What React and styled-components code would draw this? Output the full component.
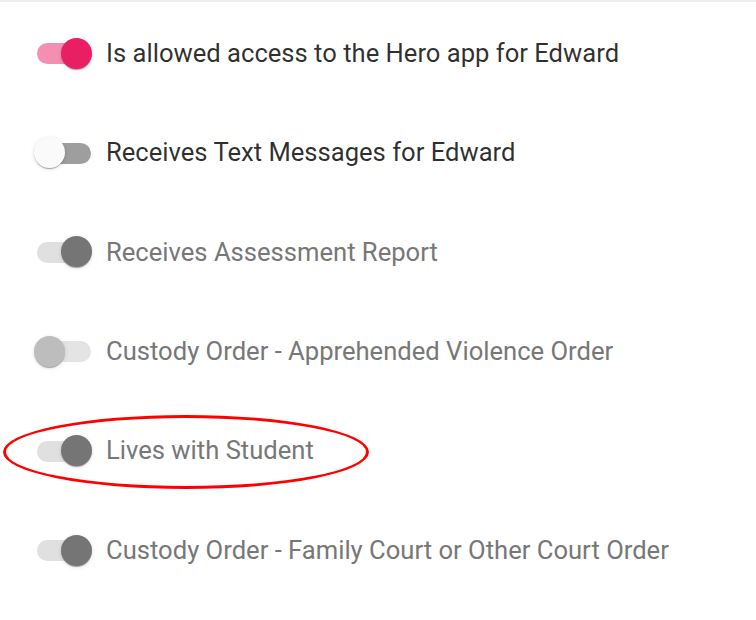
import React from "react";
import styled, { createGlobalStyle } from "styled-components";

const GlobalStyle = createGlobalStyle`
  html, body {
    margin: 0;
    padding: 0;
    background: #ffffff;
  }
  body {
    font-family: Roboto, "Liberation Sans", sans-serif;
  }
`;

const Page = styled.div`
  width: 756px;
  height: 620px;
  box-sizing: border-box;
  border-top: 2px solid #eeeeee;
  padding-top: 2px;
  overflow: hidden;
`;

const Row = styled.div`
  position: relative;
  display: flex;
  align-items: center;
  height: 99.4px;
  padding-left: 34px;
  gap: 14px;
`;

const SwitchRoot = styled.span`
  position: relative;
  display: inline-block;
  flex: none;
  width: 58px;
  height: 32px;
`;

const Track = styled.span`
  position: absolute;
  left: 3px;
  top: 5.5px;
  width: 54px;
  height: 21px;
  border-radius: 11px;
  background: ${(p) => p.$color};
`;

const Thumb = styled.span`
  position: absolute;
  top: 0;
  left: ${(p) => (p.$on ? "27px" : "0")};
  width: 31px;
  height: 31px;
  border-radius: 50%;
  background: ${(p) => p.$color};
  box-shadow: 0 2px 1px -1px rgba(0, 0, 0, 0.2), 0 1px 1px 0 rgba(0, 0, 0, 0.14),
    0 1px 4px 0 rgba(0, 0, 0, 0.12);
`;

const Label = styled.span`
  font-family: Roboto, "Liberation Sans", sans-serif;
  font-size: 25.6px;
  line-height: 1;
  color: ${(p) => (p.$disabled ? "#777777" : "rgba(0, 0, 0, 0.82)")};
  white-space: nowrap;
`;

const Highlight = styled.span`
  position: absolute;
  left: 3px;
  top: 13px;
  width: 366px;
  height: 74px;
  box-sizing: border-box;
  border: 3px solid #ff0000;
  border-radius: 50%;
  pointer-events: none;
`;

const palette = {
  on: { track: "#f48fb1", thumb: "#e91e63" },
  off: { track: "#9e9e9e", thumb: "#fafafa" },
  disabledOn: { track: "#e0e0e0", thumb: "#757575" },
  disabledOff: { track: "#e4e4e4", thumb: "#bdbdbd" },
};

const Switch = ({ on, disabled }) => {
  const key = disabled ? (on ? "disabledOn" : "disabledOff") : on ? "on" : "off";
  const c = palette[key];
  return (
    <SwitchRoot>
      <Track $color={c.track} />
      <Thumb $on={on} $color={c.thumb} />
    </SwitchRoot>
  );
};

const items = [
  { label: "Is allowed access to the Hero app for Edward", on: true },
  { label: "Receives Text Messages for Edward", on: false },
  { label: "Receives Assessment Report", on: true, disabled: true },
  { label: "Custody Order - Apprehended Violence Order", on: false, disabled: true },
  { label: "Lives with Student", on: true, disabled: true, circled: true },
  { label: "Custody Order - Family Court or Other Court Order", on: true, disabled: true },
];

export default function App() {
  return (
    <>
      <GlobalStyle />
      <Page>
        {items.map((item, index) => (
          <Row key={index}>
            <Switch on={item.on} disabled={item.disabled} />
            <Label $disabled={item.disabled}>{item.label}</Label>
            {item.circled && <Highlight />}
          </Row>
        ))}
      </Page>
    </>
  );
}
